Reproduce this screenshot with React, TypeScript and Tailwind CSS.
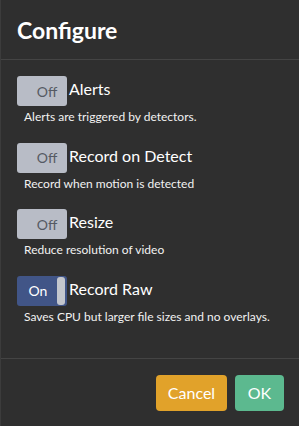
import React from 'react';

type Option = {
  label: string;
  help: string;
  on: boolean;
};

const options: Option[] = [
  { label: 'Alerts', help: 'Alerts are triggered by detectors.', on: false },
  { label: 'Record on Detect', help: 'Record when motion is detected', on: false },
  { label: 'Resize', help: 'Reduce resolution of video', on: false },
  { label: 'Record Raw', help: 'Saves CPU but larger file sizes and no overlays.', on: true },
];

const Toggle: React.FC<{ on: boolean }> = ({ on }) => {
  if (on) {
    return (
      <div className="flex h-[30px] w-[50px] shrink-0 items-center rounded-[3px] bg-[#415587] pr-[2px]">
        <span className="flex-1 pl-[2px] text-center text-[14px] text-white">On</span>
        <span className="h-[28px] w-[8px] rounded-[3px] bg-[#c3c6cd]" />
      </div>
    );
  }
  return (
    <div className="flex h-[30px] w-[50px] shrink-0 items-center rounded-[3px] bg-[#b8bcc6] pl-[10px]">
      <span className="flex-1 text-center text-[14px] text-[#555a63]">Off</span>
    </div>
  );
};

export default function App() {
  return (
    <div
      className="flex h-[426px] w-[299px] flex-col border-l border-[#3c3c3c] bg-[#2f2f2f] text-white"
      style={{ fontFamily: 'Lato, "Open Sans", sans-serif' }}
    >
      {/* Header */}
      <div className="flex h-[60px] items-center border-b border-[#444] px-[16px]">
        <h1 className="text-[23px] leading-[28px] font-bold">Configure</h1>
      </div>

      {/* Options */}
      <div className="flex flex-1 flex-col gap-[17px] px-[16px] pt-[16px]">
        {options.map((o) => (
          <div key={o.label} className="flex flex-col">
            <div className="flex items-start">
              <Toggle on={o.on} />
              <span className="ml-[2px] mt-[3px] text-[16px] leading-[20px]">{o.label}</span>
            </div>
            <p className="mt-[3px] pl-[7px] text-[12px] leading-[16.5px] text-[#f2f2f2]">{o.help}</p>
          </div>
        ))}
      </div>

      {/* Footer */}
      <div className="flex justify-end gap-[8px] border-t border-[#444] px-[15px] pt-[16px] pb-[15px]">
        <button className="h-[36px] w-[71px] rounded-[4px] bg-[#e1a22a] text-[16px] text-white">Cancel</button>
        <button className="h-[36px] w-[49px] rounded-[4px] bg-[#5cb98f] text-[16px] text-white">OK</button>
      </div>
    </div>
  );
}
